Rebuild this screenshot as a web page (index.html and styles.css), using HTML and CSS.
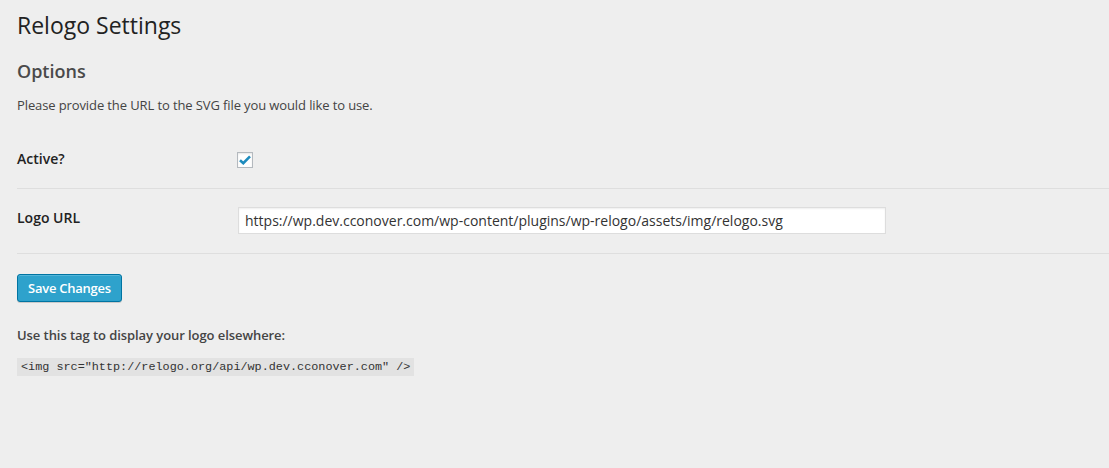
FILE: index.html
```html
<!DOCTYPE html>
<html>
<head>
<meta charset="utf-8">
<link rel="stylesheet" href="styles.css">
</head>
<body>
<div class="wrap">
  <h2 class="title">Relogo Settings</h2>
  <h3 class="section">Options</h3>
  <p class="desc">Please provide the URL to the SVG file you would like to use.</p>
  <div class="form-table">
    <div class="row row-check">
      <div class="th">Active?</div>
      <div class="td">
        <span class="checkbox">
          <svg width="12" height="10" viewBox="0 0 12 10"><path d="M1 5.2 L4.3 8.2 L11 1.3" fill="none" stroke="#1e8cbe" stroke-width="2.6" stroke-linejoin="miter"/></svg>
        </span>
      </div>
    </div>
    <div class="row row-input">
      <div class="th">Logo URL</div>
      <div class="td">
        <div class="input">https://wp.dev.cconover.com/wp-content/plugins/wp-relogo/assets/img/relogo.svg</div>
      </div>
    </div>
  </div>
  <div class="submit">
    <span class="button">Save Changes</span>
  </div>
  <p class="tag-label">Use this tag to display your logo elsewhere:</p>
  <div class="code-line"><code class="code">&lt;img src="http://relogo.org/api/wp.dev.cconover.com" /&gt;</code></div>
</div>
</body>
</html>
```
FILE: styles.css
```css
html, body {
  margin: 0;
  padding: 0;
  background: #eeeeee;
}
body {
  font-family: "Open Sans", "Liberation Sans", sans-serif;
  color: #444;
  font-size: 13px;
}
.wrap {
  padding: 0 0 0 17px;
  height: 468px;
  box-sizing: border-box;
  overflow: hidden;
}
.title {
  margin: 0;
  padding-top: 11px;
  font-size: 23px;
  line-height: 29px;
  font-weight: 400;
  color: #222;
}
.section {
  margin: 0;
  padding-top: 19px;
  font-size: 18px;
  line-height: 24px;
  font-weight: 600;
  color: #4a4a4a;
}
.desc {
  margin: 0;
  padding-top: 12px;
  font-size: 13px;
  line-height: 20px;
  letter-spacing: -0.11px;
  color: #444;
}
.form-table {
  margin-top: 15px;
}
.row {
  display: flex;
  align-items: flex-start;
  border-bottom: 1px solid #dedede;
}
.th {
  width: 200px;
  padding: 20px 10px 20px 0;
  font-size: 14px;
  line-height: 18px;
  font-weight: 600;
  color: #222;
  flex: none;
}
.td {
  padding: 0 10px;
}
.row-check .td {
  padding-top: 22px;
}
.checkbox {
  display: flex;
  align-items: center;
  justify-content: center;
  width: 16px;
  height: 16px;
  box-sizing: border-box;
  border: 1px solid #b4b9be;
  background: #fff;
  box-shadow: inset 0 1px 2px rgba(0,0,0,0.1);
}
.row-input .td {
  padding-top: 18px;
  padding-bottom: 19px;
  padding-left: 11px;
}
.input {
  width: 648px;
  height: 27px;
  box-sizing: border-box;
  border: 1px solid #dddddd;
  background: #fff;
  box-shadow: inset 0 1px 2px rgba(0,0,0,0.07);
  padding: 0 6px;
  font-size: 14px;
  line-height: 25px;
  color: #333;
  white-space: nowrap;
}
.submit {
  padding-top: 20px;
  display: flex;
}
.button {
  display: block;
  height: 28px;
  box-sizing: border-box;
  padding: 0 10px 1px;
  border: 1px solid #0074a2;
  border-radius: 3px;
  background: #2ea2cc;
  box-shadow: inset 0 1px 0 rgba(120,200,230,0.5), 0 1px 0 rgba(0,0,0,0.15);
  color: #fff;
  font-size: 13px;
  font-weight: 600;
  letter-spacing: -0.25px;
  line-height: 26px;
}
.tag-label {
  margin: 0;
  padding-top: 24px;
  font-size: 13px;
  line-height: 18px;
  font-weight: 600;
  letter-spacing: -0.07px;
  color: #444;
}
.code-line {
  padding-top: 14px;
  display: flex;
}
.code {
  display: block;
  background: #e2e2e2;
  padding: 2px 4px 1px;
  font-family: "Liberation Mono", "DejaVu Sans Mono", monospace;
  font-size: 11.8px;
  line-height: 15px;
  color: #333;
}
```
